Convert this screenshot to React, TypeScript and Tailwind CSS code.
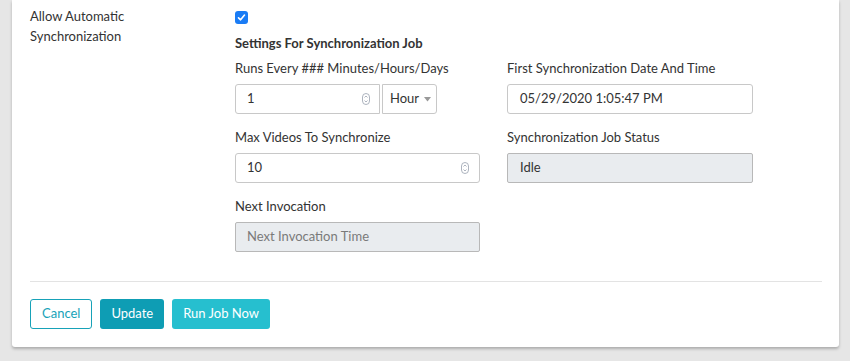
import React from "react";

const font = { fontFamily: "Lato, 'Open Sans', sans-serif" };

function Spinner() {
    return (
        <svg width="8" height="12" viewBox="0 0 8 12" className="text-gray-400">
            <rect x="0.5" y="0.5" width="7" height="11" rx="3.5" fill="none" stroke="currentColor" strokeWidth="0.8" />
            <path d="M2.5 4.5 L4 3 L5.5 4.5" fill="none" stroke="currentColor" strokeWidth="0.8" />
            <path d="M2.5 7.5 L4 9 L5.5 7.5" fill="none" stroke="currentColor" strokeWidth="0.8" />
        </svg>
    );
}

function Field({ label, children }: { label: string; children: React.ReactNode }) {
    return (
        <div className="flex flex-col">
            <div className="h-5 leading-5 text-[13px] text-[#333]">{label}</div>
            <div className="mt-[6px]">{children}</div>
        </div>
    );
}

export default function App() {
    return (
        <div className="w-[850px] h-[361px] bg-[#e6e6e6] overflow-hidden" style={font}>
            <div className="ml-[12px] w-[827px] h-[347px] bg-white shadow-[0_2px_3px_rgba(0,0,0,0.25)] rounded-b-[3px] px-[18px] pt-[6px] flex flex-col">
                <div className="flex">
                    <div className="w-[205px] text-[13px] leading-5 text-[#333]">
                        Allow Automatic<br />Synchronization
                    </div>
                    <div className="flex flex-col">
                        <div className="h-5 flex items-center">
                            <div className="w-[13px] h-[13px] rounded-[3px] bg-[#1a7cf5] flex items-center justify-center mt-[3px]">
                                <svg width="9" height="9" viewBox="0 0 9 9">
                                    <path d="M1.5 4.8 L3.6 6.8 L7.5 2" fill="none" stroke="white" strokeWidth="1.6" strokeLinecap="round" strokeLinejoin="round" />
                                </svg>
                            </div>
                        </div>
                        <div className="h-5 leading-5 mt-[7px] text-[13px] font-bold text-[#333]">Settings For Synchronization Job</div>
                        <div className="grid grid-cols-[245px_246px] gap-x-[27px] gap-y-[13px] mt-[5px]">
                            <Field label="Runs Every ### Minutes/Hours/Days">
                                <div className="flex gap-[2px]">
                                    <div className="w-[145px] h-[30px] border border-[#c8c8c8] rounded-l-[3px] flex items-center justify-between pl-[11px] pr-[9px] text-[13px] text-[#333]">
                                        <span>1</span>
                                        <Spinner />
                                    </div>
                                    <div className="w-[55px] h-[30px] border border-[#c8c8c8] rounded-r-[3px] flex items-center pl-[7px] gap-[5px] text-[13px] text-[#333]">
                                        <span>Hour</span>
                                        <svg width="7" height="5" viewBox="0 0 7 5"><path d="M0 0 L7 0 L3.5 4.5 Z" fill="#999" /></svg>
                                    </div>
                                </div>
                            </Field>
                            <Field label="First Synchronization Date And Time">
                                <div className="h-[30px] border border-[#c8c8c8] rounded-[3px] flex items-center pl-[12px] text-[13px] text-[#333]">
                                    05/29/2020 1:05:47 PM
                                </div>
                            </Field>
                            <Field label="Max Videos To Synchronize">
                                <div className="h-[30px] border border-[#c8c8c8] rounded-[3px] flex items-center justify-between pl-[11px] pr-[10px] text-[13px] text-[#333]">
                                    <span>10</span>
                                    <Spinner />
                                </div>
                            </Field>
                            <Field label="Synchronization Job Status">
                                <div className="h-[30px] border border-[#b8b8b8] bg-[#e9ecef] rounded-[2px] flex items-center pl-[12px] text-[13px] text-[#333]">
                                    Idle
                                </div>
                            </Field>
                            <Field label="Next Invocation">
                                <div className="h-[30px] border border-[#b8b8b8] bg-[#e9ecef] rounded-[2px] flex items-center pl-[11px] text-[13px] text-[#7a7a7a]">
                                    Next Invocation Time
                                </div>
                            </Field>
                        </div>
                    </div>
                </div>
                <div className="mt-[29px] border-t border-[#e3e3e3] w-[792px]" />
                <div className="flex gap-[8px] mt-[17px]">
                    <button className="h-[30px] px-[11px] rounded-[3px] border border-[#17a2b8] bg-white text-[#17a2b8] text-[13px]">Cancel</button>
                    <button className="h-[30px] px-[11px] rounded-[3px] bg-[#0e9db4] text-white text-[13px]">Update</button>
                    <button className="h-[30px] px-[11px] rounded-[3px] bg-[#26bfcf] text-white text-[13px]">Run Job Now</button>
                </div>
            </div>
        </div>
    );
}
